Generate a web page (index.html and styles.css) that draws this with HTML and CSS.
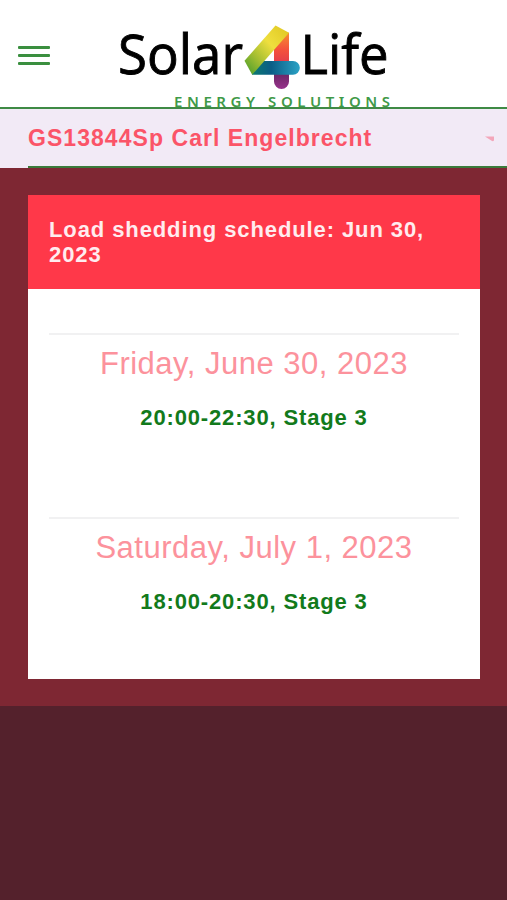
FILE: index.html
```html
<!DOCTYPE html>
<html lang="en">
<head>
    <meta charset="UTF-8">
    <meta name="viewport" content="width=device-width, initial-scale=1.0">
    <title>Solar4Life</title>
    <link rel="stylesheet" href="styles.css">
</head>
<body>
    <header class="header">
        <button class="menu-btn" aria-label="Menu">
            <span></span>
            <span></span>
            <span></span>
        </button>
        <svg class="logo" width="280" height="107" viewBox="115 0 280 107">
            <defs>
                <linearGradient id="yellow" x1="0" y1="1" x2="1" y2="0">
                    <stop offset="0" stop-color="#3f9a2c"/>
                    <stop offset="0.3" stop-color="#a2bd31"/>
                    <stop offset="0.6" stop-color="#efdf3e"/>
                    <stop offset="1" stop-color="#dfc51f"/>
                </linearGradient>
                <linearGradient id="red" x1="0" y1="0" x2="0" y2="1">
                    <stop offset="0" stop-color="#f6902f"/>
                    <stop offset="0.3" stop-color="#f4523c"/>
                    <stop offset="0.55" stop-color="#e23c4c"/>
                    <stop offset="0.75" stop-color="#702868"/>
                    <stop offset="1" stop-color="#97328c"/>
                </linearGradient>
                <linearGradient id="blue" x1="0" y1="0" x2="1" y2="0">
                    <stop offset="0" stop-color="#0b7a70"/>
                    <stop offset="0.4" stop-color="#0b5d86"/>
                    <stop offset="1" stop-color="#2ba3c6"/>
                </linearGradient>
            </defs>
            <text class="logo-name" x="118" y="74" textLength="125" lengthAdjust="spacingAndGlyphs">Solar</text>
            <path fill="url(#red)" d="M274 40L289 32.5V81.5A7.5 7.5 0 0 1 274 81.5Z"/>
            <path fill="url(#blue)" d="M252 61H293A6.8 6.8 0 0 1 293 74.7H252Z"/>
            <path fill="url(#yellow)" d="M275.5 25.5L289 32.7L252.2 74.7L244.5 60.7Z"/>
            <text class="logo-name" x="300.5" y="74" textLength="88" lengthAdjust="spacingAndGlyphs">Life</text>
            <text class="logo-tag" x="174" y="107" textLength="216">ENERGY SOLUTIONS</text>
        </svg>
    </header>

    <div class="account">
        <div class="account-select">
            <span>GS13844Sp Carl Engelbrecht</span>
            <svg class="arrow" width="9" height="6" viewBox="0 0 9 6">
                <path d="M0 0.5H9V4Q9 5.5 7 5Z"/>
            </svg>
        </div>
    </div>

    <main class="content">
        <div class="card">
            <h2 class="card-header">Load shedding schedule: Jun 30, 2023</h2>
            <div class="card-body">
                <div class="day">
                    <h3>Friday, June 30, 2023</h3>
                    <p>20:00-22:30, Stage 3</p>
                </div>
                <div class="day">
                    <h3>Saturday, July 1, 2023</h3>
                    <p>18:00-20:30, Stage 3</p>
                </div>
            </div>
        </div>
    </main>
</body>
</html>
```
FILE: styles.css
```css
* {
    box-sizing: border-box;
}
body {
    margin: 0;
    min-height: 900px;
    background-color: #54212c;
    font-family: "Liberation Sans", Arial, sans-serif;
}
.header {
    display: flex;
    align-items: flex-end;
    height: 109px;
    background-color: white;
    border-bottom: 2px solid #3f8a45;
}
.menu-btn {
    display: flex;
    flex-direction: column;
    gap: 5px;
    width: 32px;
    margin: 0 65px 42px 18px;
    padding: 0;
    border: none;
    background: none;
}
.menu-btn span {
    height: 3px;
    border-radius: 1px;
    background-color: #3a8f3f;
}
.logo {
    overflow: visible;
}
.logo-name {
    font-family: "Open Sans", "Noto Sans", sans-serif;
    font-size: 55px;
    fill: black;
    stroke: black;
    stroke-width: 0.9px;
}
.logo-tag {
    font-family: "Noto Sans", "Open Sans", sans-serif;
    font-size: 15px;
    font-weight: 600;
    fill: #3f9a48;
}
.account {
    height: 59px;
    padding-left: 28px;
    background-color: #f2eaf6;
}
.account-select {
    display: flex;
    align-items: center;
    justify-content: space-between;
    height: 59px;
    padding: 2px 13px 0 0;
    border-bottom: 2px solid #3b7a3b;
    color: #fb5468;
    font-size: 23px;
    font-weight: bold;
    letter-spacing: 1.05px;
}
.arrow {
    fill: #f3a6ba;
}
.content {
    height: 538px;
    padding: 27px 27px 0 28px;
    background-color: #7e2733;
}
.card {
    height: 484px;
    background-color: white;
}
.card-header {
    height: 94px;
    margin: 0;
    padding: 22px 21px;
    background-color: #ff3849;
    color: #ffecef;
    font-size: 22px;
    line-height: 25px;
    letter-spacing: 0.9px;
}
.card-body {
    padding: 44px 21px 0;
}
.day {
    height: 184px;
    padding-top: 11px;
    border-top: 2px solid #f1f1f2;
    text-align: center;
}
.day h3 {
    margin: 0;
    color: #fc929c;
    font-size: 31px;
    font-weight: normal;
    line-height: 36px;
    letter-spacing: 0.5px;
}
.day p {
    margin: 23px 0 0;
    color: #127a1b;
    font-size: 22px;
    font-weight: bold;
    line-height: 26px;
    letter-spacing: 0.85px;
}
```
